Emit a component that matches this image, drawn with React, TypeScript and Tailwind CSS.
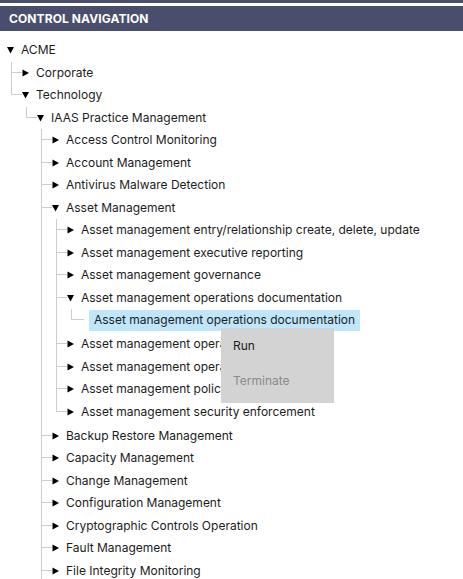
import React from "react";

type TNode = {
  label: string;
  open?: boolean;
  leaf?: boolean;
  selected?: boolean;
  children?: TNode[];
};

const tree: TNode = {
  label: "ACME",
  open: true,
  children: [
    { label: "Corporate" },
    {
      label: "Technology",
      open: true,
      children: [
        {
          label: "IAAS Practice Management",
          open: true,
          children: [
            { label: "Access Control Monitoring" },
            { label: "Account Management" },
            { label: "Antivirus Malware Detection" },
            {
              label: "Asset Management",
              open: true,
              children: [
                { label: "Asset management entry/relationship create, delete, update" },
                { label: "Asset management executive reporting" },
                { label: "Asset management governance" },
                {
                  label: "Asset management operations documentation",
                  open: true,
                  children: [
                    {
                      label: "Asset management operations documentation",
                      leaf: true,
                      selected: true,
                    },
                  ],
                },
                { label: "Asset management operations monitoring" },
                { label: "Asset management operations reporting" },
                { label: "Asset management policy" },
                { label: "Asset management security enforcement" },
              ],
            },
            { label: "Backup Restore Management" },
            { label: "Capacity Management" },
            { label: "Change Management" },
            { label: "Configuration Management" },
            { label: "Cryptographic Controls Operation" },
            { label: "Fault Management" },
            { label: "File Integrity Monitoring" },
            { label: "Firewall Management" },
            { label: "Identity Management" },
          ],
        },
      ],
    },
  ],
};

function Tri({ open }: { open?: boolean }) {
  return (
    <svg width="7" height="8" viewBox="0 0 7 8" className="shrink-0 mr-[7px]">
      {open ? (
        <polygon points="0,1 7,1 3.5,7.5" fill="#000" />
      ) : (
        <polygon points="0.5,0.5 7,4 0.5,7.5" fill="#000" />
      )}
    </svg>
  );
}

function Children({ nodes }: { nodes: TNode[] }) {
  return (
    <ul className="pb-[1.5px]">
      {nodes.map((n, i) => {
        const last = i === nodes.length - 1;
        return (
          <li key={i} className={last ? "" : "border-l border-[#cdcdcd]"}>
            {n.leaf ? (
              <div className="flex h-[22.5px] items-center">
                <span
                  className={
                    "self-start h-[11px] border-b border-[#cdcdcd] shrink-0 " +
                    (last ? "w-[13px] border-l" : "w-[12px]")
                  }
                />
                <span
                  className={
                    "ml-[5px] flex h-[21px] items-center px-[5px] whitespace-nowrap text-[12px] text-[#1c1c1c] " +
                    (n.selected ? "bg-[#bfe6fb]" : "")
                  }
                >
                  {n.label}
                </span>
              </div>
            ) : (
              <div className="flex h-[22.5px] items-center">
                <span
                  className={
                    "self-start h-[11px] border-b border-[#cdcdcd] shrink-0 " +
                    (last ? "w-[11px] border-l" : "w-[10px]")
                  }
                />
                <Tri open={n.open} />
                <span className="whitespace-nowrap text-[12px] text-[#1c1c1c]">{n.label}</span>
              </div>
            )}
            {n.open && n.children && (
              <div className={last ? "ml-[15px]" : "ml-[14px]"}>
                <Children nodes={n.children} />
              </div>
            )}
          </li>
        );
      })}
    </ul>
  );
}

export default function App() {
  return (
    <div
      className="relative h-[579px] w-[463px] overflow-hidden bg-white"
      style={{ fontFamily: "Inter, 'Liberation Sans', sans-serif" }}
    >
      <div className="h-[3px] bg-[#4a4e6d]" />
      <div className="h-[3px] bg-white" />
      <div className="flex h-[25px] items-center bg-[#4a4e6d] pl-[9px]">
        <span className="text-[12px] font-bold tracking-[0.1px] text-white">CONTROL NAVIGATION</span>
      </div>
      <div className="pt-[8px] pl-[7px]">
        <div className="flex h-[22.5px] items-center">
          <Tri open />
          <span className="text-[12px] text-[#1c1c1c]">{tree.label}</span>
        </div>
        <div className="ml-[4px]">
          <Children nodes={tree.children!} />
        </div>
      </div>

      <div className="absolute left-[221px] top-[328px] h-[75px] w-[113px] bg-[#d3d3d3]">
        <div className="flex h-[35px] items-center pl-[12px] text-[12px] text-[#1c1c1c]">Run</div>
        <div className="flex h-[36px] items-center pl-[12px] text-[12px] text-[#8a8a8a]">Terminate</div>
      </div>
    </div>
  );
}
